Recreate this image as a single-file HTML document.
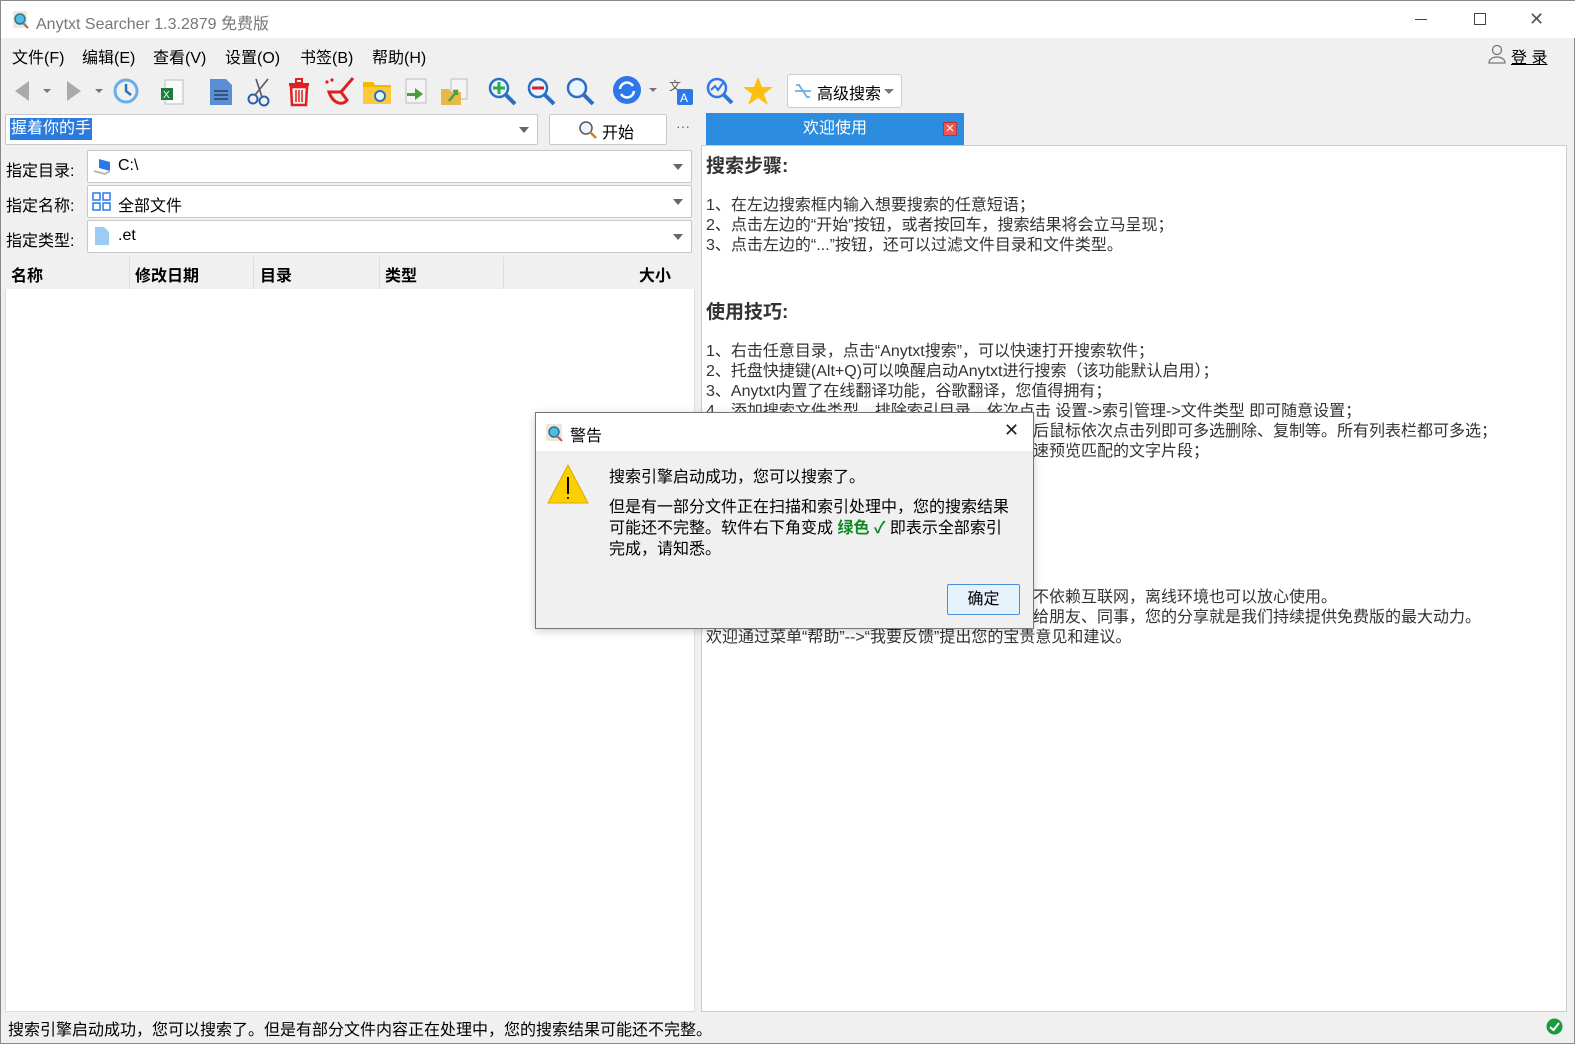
<!DOCTYPE html>
<html><head><meta charset="utf-8"><style>
*{margin:0;padding:0;box-sizing:border-box}
body{width:1575px;height:1044px;background:#f0f0f0;font-family:"Liberation Sans","Noto Sans CJK SC",sans-serif;font-size:16px;color:#000;position:relative;overflow:hidden;border:1px solid #888}
.a{position:absolute}
.cb{background:#fff;border:1px solid #c8c8c8;border-radius:2px}
.arrow{position:absolute;right:8px;top:13px;width:0;height:0;border-left:5px solid transparent;border-right:5px solid transparent;border-top:6px solid #666}
.lbl{position:absolute;left:5px;font-size:16px}
.hd{position:absolute;top:261px;font-weight:bold;font-size:16px}
.rt{position:absolute;left:705px;font-size:16px;color:#333;white-space:nowrap;line-height:20px}
</style></head><body>
<div class="a" style="left:0;top:0;width:1575px;height:37px;background:#fff"></div>
<svg class="a" style="left:11px;top:10px" width="18" height="18"><rect x="1" y="0" width="14" height="17" fill="#efe6d6" rx="2"/><circle cx="8" cy="8" r="5" fill="#5bd" stroke="#279" stroke-width="1.5"/><line x1="11" y1="12" x2="16" y2="17" stroke="#a66" stroke-width="2"/></svg>
<div class="a" style="left:35px;top:9px;color:#777;font-size:16px">Anytxt Searcher 1.3.2879 免费版</div>
<div class="a" style="left:1414px;top:18px;width:12px;height:1px;background:#444"></div>
<div class="a" style="left:1473px;top:12px;width:12px;height:12px;border:1px solid #444"></div>
<div class="a" style="left:1528px;top:8px;font-size:18px;color:#555">✕</div>
<div class="a" style="left:11px;top:43px">文件(F)</div>
<div class="a" style="left:81px;top:43px">编辑(E)</div>
<div class="a" style="left:152px;top:43px">查看(V)</div>
<div class="a" style="left:224px;top:43px">设置(O)</div>
<div class="a" style="left:299px;top:43px">书签(B)</div>
<div class="a" style="left:371px;top:43px">帮助(H)</div>
<svg class="a" style="left:1487px;top:43px" width="18" height="20"><circle cx="9" cy="6" r="4.5" fill="none" stroke="#777" stroke-width="1.3"/><path d="M1 19 C1 11 17 11 17 19 Z" fill="none" stroke="#777" stroke-width="1.3"/></svg>
<div class="a" style="left:1510px;top:43px;text-decoration:underline;font-size:16px">登 录</div>
<svg class="a" style="left:10px;top:78px" width="100" height="26"><path d="M4 12 L18 2 L18 22 Z" fill="#aaa"/><path d="M32 10 l4 4 l4 -4z" fill="#777"/><path d="M56 2 L70 12 L56 22 Z" fill="#aaa"/><path d="M84 10 l4 4 l4 -4z" fill="#777"/></svg>
<svg class="a" style="left:110px;top:76px" width="30" height="28"><circle cx="15" cy="14" r="11" fill="none" stroke="#6aaee8" stroke-width="3"/><path d="M15 7 V14 L20 18" stroke="#2a6fc0" stroke-width="2.5" fill="none"/></svg>
<svg class="a" style="left:158px;top:77px" width="28" height="28"><rect x="6" y="2" width="18" height="24" fill="#fafafa" stroke="#bbb"/><rect x="2" y="10" width="12" height="12" fill="#1e7b3e"/><text x="4" y="20" font-size="10" fill="#fff" font-family="Liberation Sans">X</text></svg>
<svg class="a" style="left:205px;top:76px" width="28" height="30"><path d="M4 2 H20 L26 8 V28 H4 Z" fill="#5a8fd8"/><path d="M8 14 H22 M8 18 H22 M8 22 H22" stroke="#234" stroke-width="1.3"/></svg>
<svg class="a" style="left:245px;top:76px" width="28" height="30"><circle cx="7" cy="22" r="4.5" fill="none" stroke="#2a5fb0" stroke-width="2"/><circle cx="18" cy="24" r="4.5" fill="none" stroke="#2a5fb0" stroke-width="2"/><path d="M9 18 L22 2 M16 20 L10 2" stroke="#556" stroke-width="1.6"/></svg>
<svg class="a" style="left:284px;top:75px" width="28" height="32"><rect x="4" y="7" width="20" height="3" fill="#e02020"/><rect x="11" y="3" width="6" height="4" fill="none" stroke="#e02020" stroke-width="2"/><path d="M6 11 H22 L21 29 H7 Z" fill="none" stroke="#e02020" stroke-width="2.5"/><path d="M11 14 V26 M14 14 V26 M17 14 V26" stroke="#e02020" stroke-width="1.5"/></svg>
<svg class="a" style="left:322px;top:75px" width="32" height="32"><path d="M30 2 L18 16" stroke="#e02020" stroke-width="3"/><path d="M6 16 C10 28 20 30 24 24 L18 16 Z" fill="none" stroke="#e02020" stroke-width="3"/><circle cx="4" cy="6" r="1.6" fill="#e02020"/><circle cx="9" cy="4" r="1.6" fill="#e02020"/></svg>
<svg class="a" style="left:360px;top:77px" width="32" height="28"><path d="M2 4 H12 L14 7 H30 V26 H2 Z" fill="#f5b800"/><rect x="2" y="9" width="28" height="17" fill="#fbc93b"/><circle cx="19" cy="18" r="5" fill="#dff" stroke="#2a6fc0" stroke-width="2"/></svg>
<svg class="a" style="left:400px;top:76px" width="30" height="30"><rect x="5" y="2" width="20" height="24" fill="#f4f4f4" stroke="#bbb"/><path d="M6 16 H14 V11 L22 17 L14 23 V19 H6 Z" fill="#4aa03c"/></svg>
<svg class="a" style="left:438px;top:76px" width="30" height="30"><rect x="12" y="2" width="16" height="20" fill="#f4f4f4" stroke="#bbb"/><path d="M2 12 H10 L12 15 H22 V28 H2 Z" fill="#e8b94a"/><path d="M10 24 L18 14 M14 14 H18 V18" stroke="#4aa03c" stroke-width="2.5" fill="none"/></svg>
<svg class="a" style="left:485px;top:74px" width="32" height="32"><circle cx="13" cy="13" r="9" fill="#e8f4ff" stroke="#2a6fc0" stroke-width="2.5"/><path d="M19 19 L29 29" stroke="#2a6fc0" stroke-width="4"/><path d="M13 7 V19 M7 13 H19" stroke="#2fa84f" stroke-width="3"/></svg>
<svg class="a" style="left:524px;top:74px" width="32" height="32"><circle cx="13" cy="13" r="9" fill="#e8f4ff" stroke="#2a6fc0" stroke-width="2.5"/><path d="M19 19 L29 29" stroke="#2a6fc0" stroke-width="4"/><path d="M7 13 H19" stroke="#e02020" stroke-width="3"/></svg>
<svg class="a" style="left:563px;top:74px" width="32" height="32"><circle cx="13" cy="13" r="9" fill="#e8f4ff" stroke="#2a6fc0" stroke-width="2.5"/><path d="M19 19 L29 29" stroke="#2a6fc0" stroke-width="4"/></svg>
<svg class="a" style="left:610px;top:74px" width="50" height="32"><circle cx="16" cy="15" r="14" fill="#2c78e8"/><path d="M9 14 A7 7 0 0 1 22 11 M23 16 A7 7 0 0 1 10 19" stroke="#fff" stroke-width="2.5" fill="none"/><path d="M38 13 l4 4 l4 -4z" fill="#777"/></svg>
<svg class="a" style="left:666px;top:77px" width="28" height="28"><text x="2" y="12" font-size="12" fill="#555" font-family="Noto Sans CJK SC">文</text><rect x="10" y="11" width="16" height="16" rx="2" fill="#2c78e8"/><text x="13" y="24" font-size="12" fill="#fff" font-family="Liberation Sans">A</text></svg>
<svg class="a" style="left:704px;top:75px" width="30" height="30"><circle cx="12" cy="12" r="9" fill="none" stroke="#2c78e8" stroke-width="2.5"/><path d="M19 19 L27 27" stroke="#2c78e8" stroke-width="4"/><path d="M6 14 L10 10 L13 14 L18 7" stroke="#2c78e8" stroke-width="2" fill="none"/></svg>
<svg class="a" style="left:741px;top:74px" width="32" height="32"><path d="M16 2 L20 12 L31 12 L22 19 L26 30 L16 23 L6 30 L10 19 L1 12 L12 12 Z" fill="#fcc010"/></svg>
<div class="a" style="left:786px;top:73px;width:115px;height:34px;background:#fff;border:1px solid #ccc;border-radius:3px"></div>
<svg class="a" style="left:792px;top:81px" width="20" height="18"><path d="M2 9 H18 M6 3 L10 9 L14 15 M3 3 L7 3 M13 15 L17 15" stroke="#6aaee8" stroke-width="1.8" fill="none"/></svg>
<div class="a" style="left:816px;top:79px;font-size:16px">高级搜索</div>
<div class="a" style="left:883px;top:88px;border-left:5px solid transparent;border-right:5px solid transparent;border-top:5px solid #777"></div>
<div class="a cb" style="left:4px;top:113px;width:533px;height:31px"><div class="arrow" style="top:12px"></div></div>
<div class="a" style="left:9px;top:117px;background:#2b7bdc;color:#fff;font-size:16px;padding:0 1px;height:22px;line-height:22px">握着你的手</div>
<div class="a cb" style="left:548px;top:113px;width:118px;height:31px"></div>
<svg class="a" style="left:577px;top:119px" width="20" height="20"><circle cx="8" cy="8" r="6" fill="#eaf4ff" stroke="#555" stroke-width="1.5"/><path d="M12 12 L18 18" stroke="#d08020" stroke-width="2.5"/></svg>
<div class="a" style="left:601px;top:118px;font-size:16px">开始</div>
<div class="a" style="left:675px;top:117px;color:#666;font-size:14px">···</div>
<div class="a" style="left:705px;top:112px;width:258px;height:33px;background:#2b8ce0;color:#fff;text-align:center;line-height:32px;font-size:16px">欢迎使用</div>
<div class="a" style="left:942px;top:121px;width:14px;height:14px;background:#e55;border:1px solid #b33;color:#fff;font-size:11px;line-height:12px;text-align:center">✕</div>
<div class="lbl" style="top:156px">指定目录:</div>
<div class="a cb" style="left:86px;top:149px;width:605px;height:33px"><div class="arrow"></div></div>
<svg class="a" style="left:92px;top:156px" width="20" height="18"><path d="M6 2 L17 5 V14 L6 11 Z" fill="#2c78e8"/><path d="M1 14 L12 17 L17 14" stroke="#bbb" stroke-width="2" fill="none"/></svg>
<div class="a" style="left:117px;top:156px">C:\</div>
<div class="lbl" style="top:191px">指定名称:</div>
<div class="a cb" style="left:86px;top:184px;width:605px;height:33px"><div class="arrow"></div></div>
<svg class="a" style="left:91px;top:191px" width="20" height="20"><g fill="none" stroke="#2c78e8" stroke-width="1.5"><rect x="1" y="1" width="7" height="7"/><rect x="11" y="1" width="7" height="7"/><rect x="1" y="11" width="7" height="7"/><rect x="11" y="11" width="7" height="7"/></g></svg>
<div class="a" style="left:117px;top:191px">全部文件</div>
<div class="lbl" style="top:226px">指定类型:</div>
<div class="a cb" style="left:86px;top:219px;width:605px;height:33px"><div class="arrow"></div></div>
<svg class="a" style="left:93px;top:225px" width="16" height="20"><path d="M1 1 H10 L15 6 V19 H1 Z" fill="#9ccbf5"/></svg>
<div class="a" style="left:117px;top:226px">.et</div>
<div class="a" style="left:4px;top:255px;width:690px;height:756px;background:#fff;border:1px solid #ddd"></div>
<div class="a" style="left:4px;top:255px;width:690px;height:33px;background:#f0f0f0"></div>
<div class="a" style="left:128px;top:256px;width:1px;height:32px;background:#ddd"></div>
<div class="a" style="left:252px;top:256px;width:1px;height:32px;background:#ddd"></div>
<div class="a" style="left:378px;top:256px;width:1px;height:32px;background:#ddd"></div>
<div class="a" style="left:502px;top:256px;width:1px;height:32px;background:#ddd"></div>
<div class="hd" style="left:10px">名称</div>
<div class="hd" style="left:134px">修改日期</div>
<div class="hd" style="left:259px">目录</div>
<div class="hd" style="left:384px">类型</div>
<div class="hd" style="left:638px">大小</div>
<div class="a" style="left:700px;top:144px;width:866px;height:867px;background:#fff;border:1px solid #ccc"></div>
<div class="a" style="left:705px;top:150px;font-size:19px;font-weight:bold;color:#333">搜索步骤:</div>
<div class="rt" style="top:195px">1、在左边搜索框内输入想要搜索的任意短语；</div>
<div class="rt" style="top:215px">2、点击左边的“开始”按钮，或者按回车，搜索结果将会立马呈现；</div>
<div class="rt" style="top:235px">3、点击左边的“...”按钮，还可以过滤文件目录和文件类型。</div>
<div class="a" style="left:705px;top:296px;font-size:19px;font-weight:bold;color:#333">使用技巧:</div>
<div class="rt" style="top:341px">1、右击任意目录，点击“Anytxt搜索”，可以快速打开搜索软件；</div>
<div class="rt" style="top:361px">2、托盘快捷键(Alt+Q)可以唤醒启动Anytxt进行搜索（该功能默认启用）；</div>
<div class="rt" style="top:381px">3、Anytxt内置了在线翻译功能，谷歌翻译，您值得拥有；</div>
<div class="rt" style="top:401px">4、添加搜索文件类型、排除索引目录，依次点击 设置->索引管理->文件类型 即可随意设置；</div>
<div class="rt" style="top:421px"><span style="display:inline-block;width:327px">5、按住Ctrl或Shift键，然</span>后鼠标依次点击列即可多选删除、复制等。所有列表栏都可多选；</div>
<div class="rt" style="top:441px"><span style="display:inline-block;width:327px">6、点击搜索结果，右侧可快</span>速预览匹配的文字片段；</div>
<div class="rt" style="top:587px"><span style="display:inline-block;width:327px">Anytxt是本地全文搜索工具，</span>不依赖互联网，离线环境也可以放心使用。</div>
<div class="rt" style="top:607px"><span style="display:inline-block;width:327px">如果您觉得好用，请分享推荐</span>给朋友、同事，您的分享就是我们持续提供免费版的最大动力。</div>
<div class="rt" style="top:627px">欢迎通过菜单“帮助”-->“我要反馈”提出您的宝贵意见和建议。</div>
<div class="a" style="left:7px;top:1015px;font-size:16px">搜索引擎启动成功，您可以搜索了。但是有部分文件内容正在处理中，您的搜索结果可能还不完整。</div>
<svg class="a" style="left:1545px;top:1017px" width="17" height="17"><circle cx="8.5" cy="8.5" r="8" fill="#1a9a3a"/><path d="M4 9 L7.5 12 L13 5" stroke="#fff" stroke-width="2" fill="none"/></svg>
<div class="a" style="left:534px;top:411px;width:499px;height:217px;background:#f0f0f0;border:1px solid #777;box-shadow:0 2px 8px rgba(0,0,0,.2)"></div>
<div class="a" style="left:535px;top:412px;width:497px;height:38px;background:#fff"></div>
<svg class="a" style="left:545px;top:423px" width="18" height="18"><rect x="0" y="0" width="16" height="17" fill="#efe6d6" rx="2"/><circle cx="8" cy="8" r="5" fill="#5bd" stroke="#279" stroke-width="1.5"/><line x1="11" y1="12" x2="16" y2="17" stroke="#a66" stroke-width="2"/></svg>
<div class="a" style="left:569px;top:421px;font-size:16px">警告</div>
<div class="a" style="left:1003px;top:419px;font-size:18px;color:#222">✕</div>
<svg class="a" style="left:546px;top:463px" width="42" height="40"><path d="M21 1 L41 39 H1 Z" fill="#fcd000" stroke="#e0a800"/><path d="M21 13 V30" stroke="#000" stroke-width="2"/><circle cx="21" cy="34" r="1" fill="#000"/></svg>
<div class="a" style="left:608px;top:462px;font-size:16px">搜索引擎启动成功，您可以搜索了。</div>
<div class="a" style="left:608px;top:496px;font-size:16px;line-height:21px;width:420px;white-space:nowrap">但是有一部分文件正在扫描和索引处理中，您的搜索结果<br>可能还不完整。软件右下角变成 <b style="color:#0a8a20">绿色 ✓</b> 即表示全部索引<br>完成，请知悉。</div>
<div class="a" style="left:946px;top:583px;width:73px;height:31px;background:#e5f1fb;border:1px solid #4a90d8;border-radius:2px;text-align:center;line-height:29px;font-size:16px">确定</div>
</body></html>
